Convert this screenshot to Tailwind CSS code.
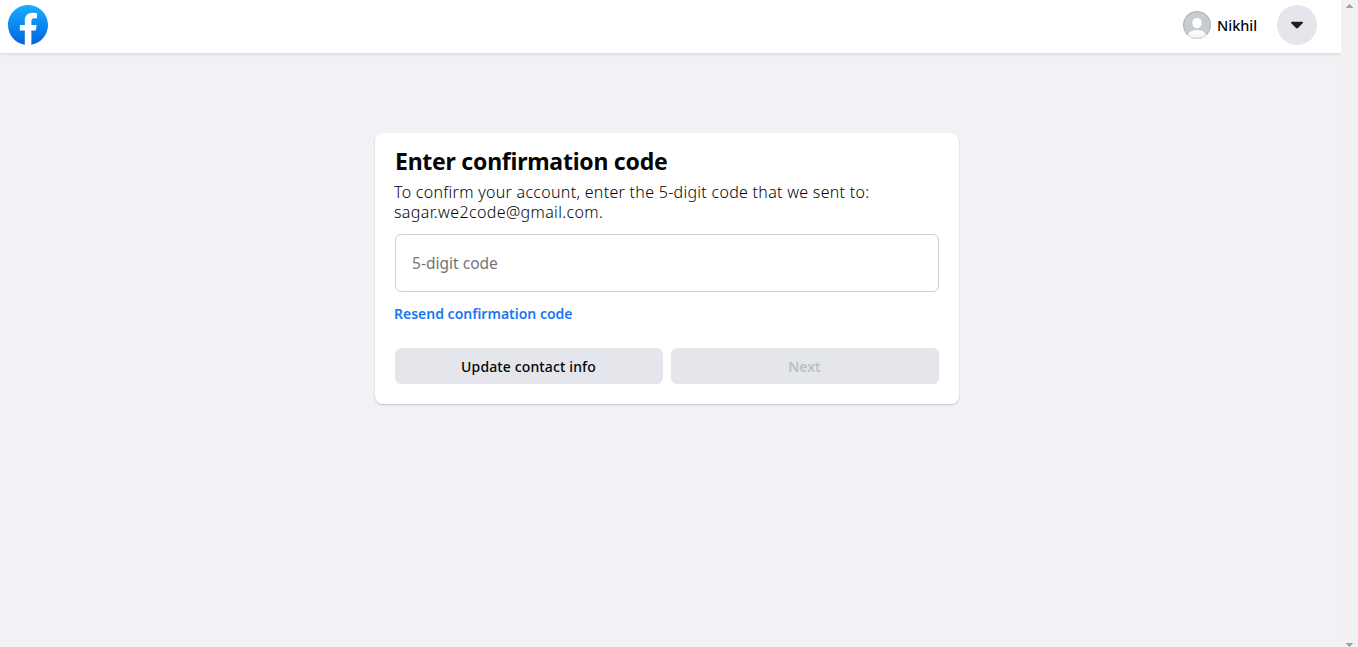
<!DOCTYPE html>
<html lang="en">
<head>
<meta charset="utf-8">
<title>Enter confirmation code</title>
<script src="https://cdn.jsdelivr.net/npm/@tailwindcss/browser@4"></script>
</head>
<body class="flex h-[647px] w-[1358px] overflow-hidden bg-[#f0f2f6] font-['Noto_Sans',sans-serif] text-[#050505]">
  <div class="flex w-[1341px] flex-col">
    <header class="flex h-[53px] shrink-0 items-start justify-between bg-white pt-[5px] pr-6 pl-2 shadow-[0_1px_4px_rgba(0,0,0,0.12)]">
      <svg class="size-10" viewBox="0 0 40 40" aria-label="Facebook">
        <defs><linearGradient id="blue" x1="0" y1="0" x2="0" y2="1"><stop offset="0" stop-color="#19afff"/><stop offset="1" stop-color="#0062e0"/></linearGradient></defs>
        <path fill="url(#blue)" d="M16.7 39.8C7.2 38.1 0 29.9 0 20 0 9 9 0 20 0s20 9 20 20c0 9.900-7.200 18.100-16.700 19.800l-1.100-.9h-4.400z"/>
        <path fill="#fff" d="m27.800 25.600.9-5.600h-5.300v-3.900c0-1.600.6-2.800 3-2.800h2.600V8.200c-1.400-.2-3-.4-4.400-.4-4.600 0-7.800 2.800-7.800 7.800V20h-5v5.600h5v14.100a19.200 19.200 0 0 0 6.600 0V25.600z"/>
      </svg>
      <div class="flex items-center">
        <svg class="size-7" viewBox="0 0 28 28">
          <defs><clipPath id="round"><circle cx="14" cy="14" r="14"/></clipPath><linearGradient id="person" x1="0" y1="0" x2="0" y2="1"><stop stop-color="#fff"/><stop offset="1" stop-color="#eceef0"/></linearGradient></defs>
          <g clip-path="url(#round)"><path fill="#c8cbd0" d="M0 0h28v28H0z"/><ellipse cx="14" cy="12" rx="4.700" ry="5.300" fill="#fff"/><path fill="url(#person)" d="M4 28c0-6 4-9 10-9s10 3 10 9z"/></g>
          <circle cx="14" cy="14" r="13.500" fill="none" stroke="#000" stroke-opacity=".12"/>
        </svg>
        <span class="ml-[6px] w-[60px] whitespace-nowrap text-[14.500px] leading-5 font-medium">Nikhil</span>
        <span class="flex size-10 items-center justify-center rounded-full bg-[#e4e6eb]">
          <svg class="h-2 w-3" viewBox="0 0 12 8"><path fill="#1c1e21" d="M1 .8h10c1 0 1.300.9.700 1.500L7 7.100c-.6.600-1.400.600-2 0L.3 2.300C-.3 1.700 0 .8 1 .8z"/></svg>
        </span>
      </div>
    </header>
    <main class="flex grow items-start justify-center pt-20 pr-[7px]">
      <section class="flex h-[271px] w-[584px] flex-col rounded-lg bg-white px-5 pt-[14px] shadow-[0_1px_2px_rgba(0,0,0,0.2)]">
        <h1 class="h-[35px] whitespace-nowrap text-[23px] leading-7 font-bold tracking-[-0.240px]">Enter confirmation code</h1>
        <p class="-ml-px flex h-[52px] flex-col whitespace-nowrap text-[16px] leading-5 font-light tracking-[0.290px]"><span>To confirm your account, enter the 5-digit code that we sent to:</span><span class="tracking-[0.370px]">sagar.we2code@gmail.com.</span></p>
        <div class="flex h-[58px] items-center rounded-md border border-[#ccd0d5] px-4 pt-[2px] text-[15.500px] tracking-[0.020px] text-[#737579]"><span>5-digit code</span></div>
        <a class="mt-3 -ml-px h-11 whitespace-nowrap text-[14px] leading-5 font-semibold text-[#1877f2]">Resend confirmation code</a>
        <div class="flex gap-2">
          <button class="h-9 flex-1 rounded-md bg-[#e4e6eb] pt-[2px] pr-px text-[14px] leading-5 font-medium tracking-[0.130px]">Update contact info</button>
          <button class="h-9 flex-1 rounded-md bg-[#e4e6eb] pt-[2px] pr-px text-[14px] leading-5 font-semibold text-[#bcc0c4]">Next</button>
        </div>
      </section>
    </main>
  </div>
  <aside class="flex w-[17px] flex-col items-center justify-between bg-[#f1f1f1] pt-1">
    <svg class="h-1 w-[7px]" viewBox="0 0 7 4"><path fill="#a3a3a3" d="M3 0h1v1h1v1h1v1h1v1H0V3h1V2h1V1h1z"/></svg>
    <svg class="h-1 w-[7px]" viewBox="0 0 7 4"><path fill="#a3a3a3" d="M0 0h7v1H6v1H5v1H4v1H3V3H2V2H1V1H0z"/></svg>
  </aside>
</body>
</html>
